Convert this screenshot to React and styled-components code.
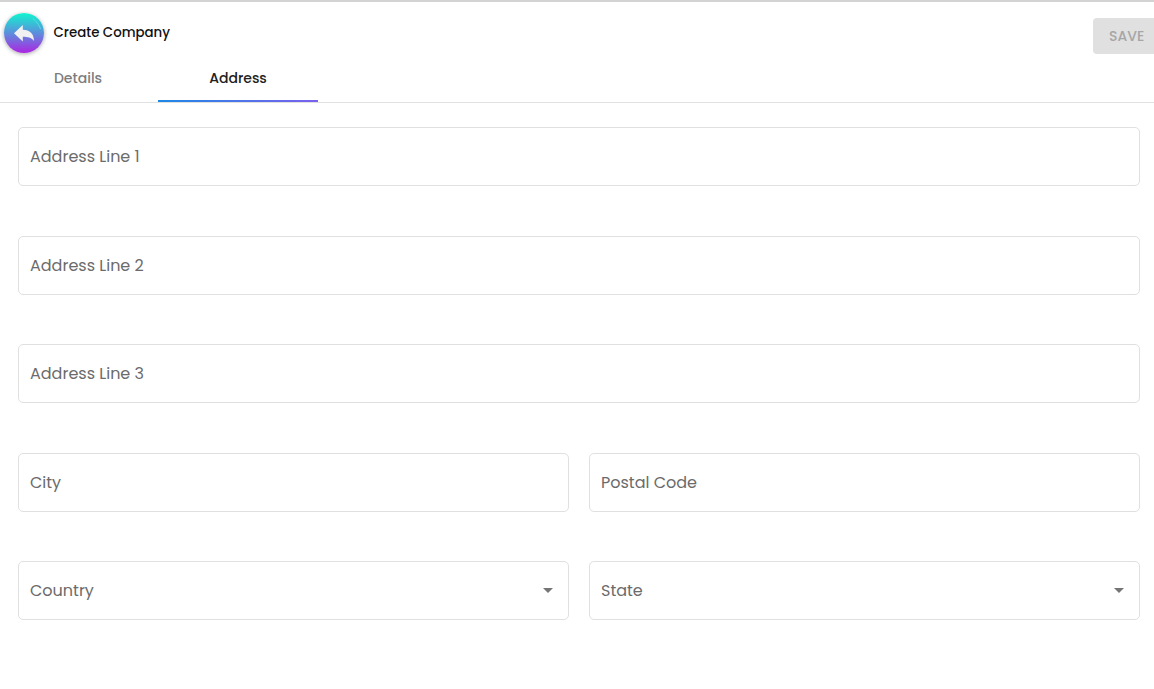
import styled, { createGlobalStyle } from "styled-components";
import { useState } from "react";

const GlobalStyle = createGlobalStyle`
  * {
    box-sizing: border-box;
  }

  body {
    margin: 0;
    background: #fff;
    font-family: Poppins, Inter, "Open Sans", sans-serif;
    overflow: hidden;
  }
`;

const Page = styled.div`
  height: 689px;
  border-top: 2px solid #d3d3d3;
  overflow: hidden;
`;

//! Header
const Header = styled.header`
  display: flex;
  align-items: flex-start;
  height: 52px;
  padding-left: 4px;
`;

const BackButton = styled.button`
  flex: none;
  width: 40px;
  height: 40px;
  margin: 11px 9.5px 0 0;
  padding: 0;
  border: 0;
  border-radius: 50%;
  background: linear-gradient(#0ff5cf, #5c8fdc 50%, #ac26e2);
  box-shadow: 0 1px 4px rgba(0, 0, 0, 0.35);
  cursor: pointer;

  svg {
    display: block;
  }
`;

const Title = styled.h1`
  flex: 1;
  margin: 21px 0 0;
  color: #111;
  font-size: 13.333px;
  font-weight: 500;
  line-height: 20px;
`;

const SaveButton = styled.button`
  flex: none;
  width: 68px;
  height: 36px;
  margin: 16px -7px 0 0;
  padding: 0 16px;
  border: 0;
  border-radius: 4px;
  background: #e0e0e0;
  color: #a6a6a6;
  font-family: inherit;
  font-size: 14px;
  font-weight: 500;
  text-align: left;
`;

//! Tabs
const Tabs = styled.nav`
  display: flex;
  height: 49px;
  margin-left: -2px;
  border-bottom: 1px solid #e0e0e0;
`;

const Tab = styled.button`
  width: 160px;
  height: 48px;
  padding: 3px 0 0;
  border: 0;
  border-bottom: 2px solid transparent;
  border-image: ${({ $active }) =>
    $active ? "linear-gradient(90deg, #1e88e5, #7b61ee) 1" : "none"};
  background: none;
  color: ${({ $active }) => ($active ? "#212121" : "#7d7d7d")};
  font-family: inherit;
  font-size: 14px;
  font-weight: 500;
  cursor: pointer;
`;

//! Form
const Form = styled.form`
  display: grid;
  grid-template-columns: 1fr 1fr;
  gap: 49.5px 20px;
  padding: 24.4px 14px 0 18px;
`;

const Field = styled.label`
  display: flex;
  align-items: center;
  justify-content: space-between;
  grid-column: ${({ $wide }) => ($wide ? "1 / -1" : "auto")};
  height: 59px;
  padding: 0.4px 15px 0 11px;
  border: 1px solid #e0e0e0;
  border-radius: 5px;
  color: #6b6b6b;
  font-size: 16px;
  line-height: 24px;
`;

const Arrow = styled.span`
  margin-bottom: 1px;
  border: 5px solid transparent;
  border-top-color: #757575;
  border-bottom: 0;
`;

const fields = [
  { label: "Address Line 1", wide: true },
  { label: "Address Line 2", wide: true },
  { label: "Address Line 3", wide: true },
  { label: "City" },
  { label: "Postal Code" },
  { label: "Country", select: true },
  { label: "State", select: true },
];

const App = () => {
  const [tab, setTab] = useState("Address");

  return (
    <>
      <GlobalStyle />
      <Page>
        <Header>
          <BackButton aria-label="Back">
            <svg width="40" height="40" viewBox="0 0 40 40">
              <path
                d="M10 20.2 18.8 12v4.8c7 0 11.2 4.2 11.2 11.2-2.8-3.6-6.2-4.2-11.2-4.2v4.600z"
                fill="#f1f1f1"
              />
              <path
                d="M29.5 6.2q5 3.5 7 9.5"
                fill="none"
                stroke="#6fe6e4"
                strokeWidth="0.7"
                strokeLinecap="round"
                strokeDasharray="1.2 1.4 20"
              />
            </svg>
          </BackButton>
          <Title>Create Company</Title>
          <SaveButton disabled>SAVE</SaveButton>
        </Header>

        <Tabs>
          {["Details", "Address"].map((name) => (
            <Tab key={name} $active={tab === name} onClick={() => setTab(name)}>
              {name}
            </Tab>
          ))}
        </Tabs>

        <Form>
          {fields.map(({ label, wide, select }) => (
            <Field key={label} $wide={wide}>
              {label}
              {select && <Arrow />}
            </Field>
          ))}
        </Form>
      </Page>
    </>
  );
};

export default App;
